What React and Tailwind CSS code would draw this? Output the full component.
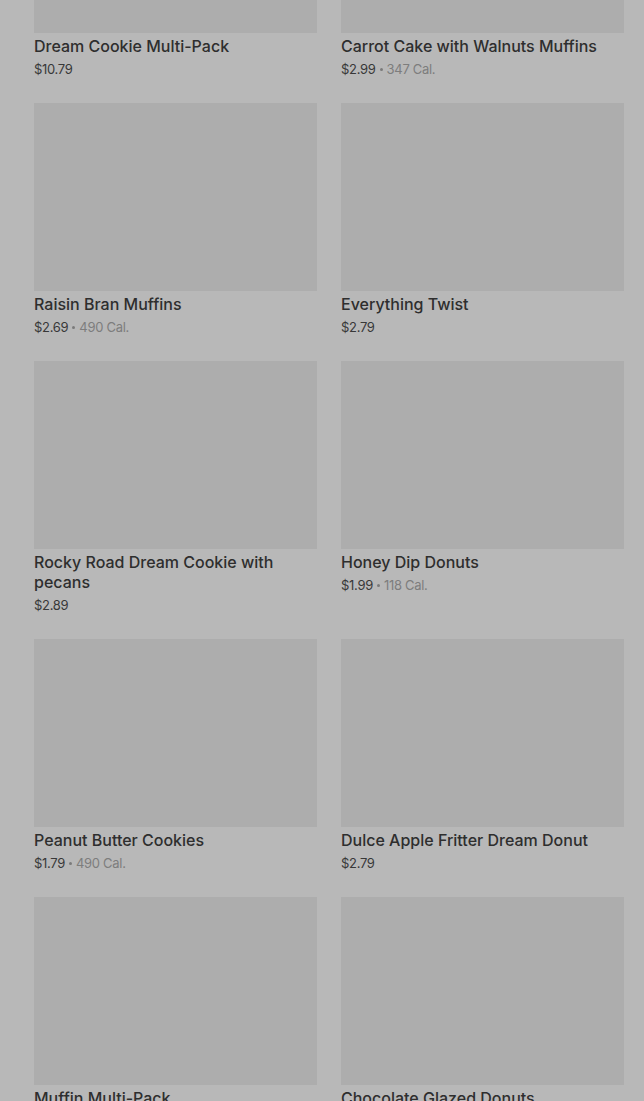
import React from "react";

const items = [
  { name: "Dream Cookie Multi-Pack", price: "$10.79" },
  { name: "Carrot Cake with Walnuts Muffins", price: "$2.99", cal: "347 Cal." },
  { name: "Raisin Bran Muffins", price: "$2.69", cal: "490 Cal." },
  { name: "Everything Twist", price: "$2.79" },
  { name: "Rocky Road Dream Cookie with pecans", price: "$2.89" },
  { name: "Honey Dip Donuts", price: "$1.99", cal: "118 Cal." },
  { name: "Peanut Butter Cookies", price: "$1.79", cal: "490 Cal." },
  { name: "Dulce Apple Fritter Dream Donut", price: "$2.79" },
  { name: "Muffin Multi-Pack", price: "$9.99" },
  { name: "Chocolate Glazed Donuts", price: "$1.99" },
];

function Card({ item }) {
  return (
    <div className="flex flex-col">
      <div className="h-[188px] w-full bg-[#adadad]" />
      <div className="mt-[3px] text-[16px] leading-5 font-medium text-[#2e2e2e] pr-6">
        {item.name}
      </div>
      <div className="mt-[3px] h-5 flex items-center text-[13px] leading-5 text-[#383838] tracking-[-0.3px]">
        <span>{item.price}</span>
        {item.cal && (
          <>
            <span className="mx-[4px] inline-block w-[3px] h-[3px] rounded-full bg-[#7a7a7a]" />
            <span className="text-[#7d7d7d]">{item.cal}</span>
          </>
        )}
      </div>
    </div>
  );
}

export default function App() {
  return (
    <div
      className="w-[644px] h-[1101px] overflow-hidden bg-[#b8b8b8]"
      style={{ fontFamily: "Inter, 'Noto Sans', Arial, sans-serif" }}
    >
      <div className="-mt-[155px] pl-[34px] pr-[20px] grid grid-cols-2 gap-x-6 gap-y-6">
        {items.map((it, i) => (
          <Card key={i} item={it} />
        ))}
      </div>
    </div>
  );
}
